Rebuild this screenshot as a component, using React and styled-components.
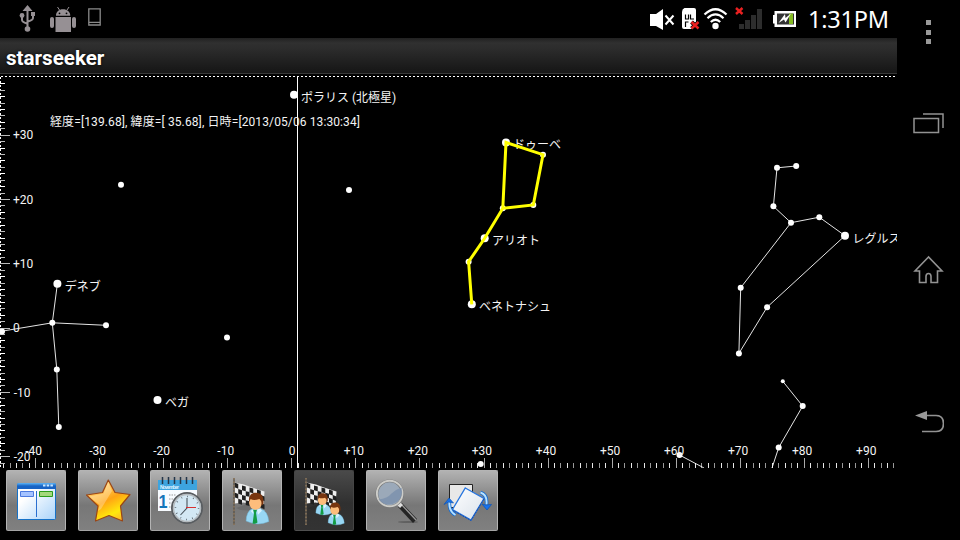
import React from 'react';
import styled, { createGlobalStyle } from 'styled-components';

const Global = createGlobalStyle`
  html, body { margin: 0; background: #000; overflow: hidden; }
  * { box-sizing: border-box; }
  svg { display: block; flex: none; }
`;

const Screen = styled.div`
  display: grid;
  grid-template-columns: 897px 63px;
  width: 960px;
  height: 540px;
  background: #000;
  color: #fff;
  overflow: hidden;
  font-family: Roboto, 'Noto Sans CJK JP', sans-serif;
`;

const Main = styled.main`
  display: flex;
  flex-direction: column;
  min-width: 0;
`;

const StatusBar = styled.header`
  display: flex;
  justify-content: space-between;
  height: 38px;
  padding: 0 9px 0 18px;
`;

const StatusGroup = styled.div`
  display: flex;
`;

const Clock = styled.time`
  width: 80px;
  margin-left: 11px;
  font: 400 23.5px/39px 'Noto Sans', sans-serif;
  letter-spacing: -0.2px;
  white-space: nowrap;
`;

const TitleBar = styled.h1`
  flex: none;
  height: 36px;
  margin: 0;
  padding-left: 6px;
  background: linear-gradient(#212121 0, #303030 5px, #2b2b2b 12px, #151515 35px, #363636 35px);
  font-size: 20.6px;
  font-weight: 700;
  line-height: 40px;
  text-shadow: 0 0 3px #000;
`;

const Toolbar = styled.nav`
  display: flex;
  gap: 12px;
  padding: 2px 6px;
`;

const Tool = styled.button`
  width: 60px;
  height: 61px;
  padding: 0;
  border: 1px solid ${(p) => (p.$dark ? '#454545' : '#b4b4b4')};
  border-bottom-color: ${(p) => (p.$dark ? '#505050' : '#a5a5a5')};
  border-radius: 2px;
  background: ${(p) =>
    p.$dark
      ? 'linear-gradient(#4a4a4a, #303030 55%, #333)'
      : 'linear-gradient(#b2b2b2, #777 58%, #808080)'};
  svg { margin: -1px; }
`;

const NavColumn = styled.aside`
  display: flex;
  flex-direction: column;
  padding: 20px 0 0 15px;
`;

const NavButton = styled.button`
  display: block;
  width: 32px;
  height: ${(p) => p.$height}px;
  margin: 0 0 ${(p) => p.$gap}px;
  padding: 0;
  border: 0;
  background: none;
`;

const Sky = styled.svg`
  text { fill: #f4f4f4; font-size: 12px; }
`;

/* ---------- sky chart ---------- */

const X0 = 292.2;
const Y0 = 328.1;
const lonTicks = Array.from({ length: 142 }, (_, i) => i - 45).filter((n) => X0 + n * 6.405 < 897);
const latTicks = Array.from({ length: 62 }, (_, i) => i - 22).filter((n) => Y0 - n * 6.43 < 468 && Y0 - n * 6.43 > 78);
const signed = (n) => (n > 0 ? `+${n}` : `${n}`);

const stars = [
  [294, 94.8, 4], [121, 184.7, 3], [349, 189.9, 3], [57.4, 283.7, 4], [52.3, 322.8, 3],
  [106, 325.3, 3], [2, 331.5, 3], [56.8, 369.4, 3], [58.8, 427, 3], [157.5, 400.1, 4],
  [227, 337.4, 3], [506, 142.4, 4], [543, 154.7, 3], [533.3, 205, 3], [502.8, 208.3, 3],
  [484.7, 238.3, 4], [468.6, 261.7, 3], [471.8, 304.3, 4], [777, 167.8, 3], [796.2, 166, 3],
  [773.4, 206.3, 3], [791, 222.7, 3], [819.3, 217.2, 3], [845, 235.7, 4], [740.7, 287.7, 3],
  [767.1, 307.2, 3], [738.9, 353.4, 3], [782.8, 381.3, 2], [802.7, 406.1, 3], [778.7, 447.6, 3],
  [679.5, 455, 3], [480.7, 464, 3],
];

const figures = [
  '57.4,283.7 52.3,322.8 56.8,369.4 58.8,427',
  '0,331.5 52.3,322.8 106,325.3',
  '796.2,166 777,167.8 773.4,206.3 791,222.7 819.3,217.2 845,235.7 767.1,307.2 738.9,353.4 740.7,287.7 791,222.7',
  '782.8,381.3 802.7,406.1 778.7,447.6 772,468',
  '679.5,455 704,468',
];

const names = [
  [301, 102.4, 'ポラリス (北極星)'], [513, 148.5, 'ドゥーベ'], [492, 245.2, 'アリオト'],
  [479, 311.2, 'ベネトナシュ'], [64.8, 291.2, 'デネブ'], [165, 406.8, 'ベガ'], [852.5, 243.2, 'レグルス'],
];

function SkyChart() {
  return (
    <Sky width="897" height="394" viewBox="0 74 897 394">
      <path d="M1 76.5H896" stroke="#fff" strokeDasharray="2 2" />
      <path d="M.5 77V468" stroke="#fff" strokeDasharray="2 2" />
      {lonTicks.map((n) => {
        const x = Math.floor(X0 + n * 6.405 - 0.3);
        const major = n % 10 === 0;
        return <path key={n} d={`M${x + 0.5} ${major ? 458 : 463}V468`} stroke={major ? '#aaa' : n % 2 ? '#e8e8e8' : '#999'} />;
      })}
      {latTicks.map((n) => {
        const y = Math.floor(Y0 - n * 6.43);
        const major = n % 10 === 0;
        return <path key={n} d={`M0 ${y + 0.5}H${major ? 10 : 5}`} stroke={major || n % 2 ? '#bbb' : '#fff'} />;
      })}
      {figures.map((f) => <polyline key={f} points={f} fill="none" stroke="#fff" strokeWidth=".9" />)}
      {stars.map(([x, y, r]) => <circle key={`${x}-${y}`} cx={x} cy={y} r={r} fill="#fff" />)}
      {names.map(([x, y, name]) => <text key={name} x={x} y={y}>{name}</text>)}
      <path d="M297.5 77V468" stroke="#fff" />
      {[-40, -30, -20, -10, 0, 10, 20, 30, 40, 50, 60, 70, 80, 90].map((n) => (
        <text key={n} x={X0 + n * 6.405 - (n ? 2.4 : 0)} y="455" textAnchor="middle">{signed(n)}</text>
      ))}
      {[30, 20, 10, 0, -10, -20].map((n) => (
        <text key={n} x={n < 0 ? 13.8 : 13} y={Y0 - n * 6.43 + 4.1}>{signed(n)}</text>
      ))}
      <text x="50" y="126.2" textLength="310">経度=[139.68], 緯度=[ 35.68], 日時=[2013/05/06 13:30:34]</text>
      <polyline
        points="471.8,304.3 468.6,261.7 484.7,238.3 502.8,208.3 533.3,205 543,154.7 506,142.4 502.8,208.3"
        fill="none" stroke="#ff0" strokeWidth="3"
      />
    </Sky>
  );
}

/* ---------- status icons ---------- */

const NoticeIcons = () => (
  <svg width="86" height="38" viewBox="18 0 86 38" fill="#969094">
    <path d="M27.5 9V28M22 16v4q0 2 5 3.5M33 14v4q0 2-5 3.5" fill="none" stroke="#969094" strokeWidth="2" />
    <path d="M27.5 5l5 6h-10zM31 12h4v4h-4z" />
    <circle cx="22" cy="15.5" r="2.4" /><circle cx="27.5" cy="29" r="2.8" />
    <path d="M56 15.7c0-4 3-6.5 7-6.5s7.3 2.5 7.3 6.5zM55.500 17H71v15H55.500z" />
    <rect x="50" y="17" width="4" height="11" rx="2" /><rect x="72" y="17" width="4" height="11" rx="2" />
    <path d="M57.500 7l2 3M69 7l-2 3" stroke="#969094" strokeWidth="1" />
    <circle cx="59.500" cy="13.300" r=".9" fill="#000" /><circle cx="66.500" cy="13.300" r=".9" fill="#000" />
    <path d="M88.800 8.800h11.400v16.200H88.800zM89 22.300h11" fill="none" stroke="#8a8a8a" strokeWidth="1.300" />
  </svg>
);

const SystemIcons = () => (
  <svg width="148" height="38" viewBox="649 0 148 38" fill="#fff">
    <path d="M650 14h6l7-5v21l-7-4h-6zM690 8h-5.500q-2.500 1-2.500 4v15q0 2 2 2h8v-4h4V10q0-2-2-2z" />
    <path d="M665.500 15.500l8 9M673.500 15.500l-8 9" stroke="#fff" strokeWidth="2" />
    <path d="M685.500 14.500v4.500h3v-4.500M690.500 14.500v4.500h3.500M685.500 27v-5h3" fill="none" stroke="#000" strokeWidth="1.200" />
    <path d="M691.500 22l7 6.500M698.500 22l-7 6.500" stroke="#000" strokeWidth="4" />
    <path d="M691.500 22l7 6.500M698.500 22l-7 6.500" stroke="#e92020" strokeWidth="2.500" />
    <g fill="none" stroke="#fff" strokeWidth="2.200">
      <path d="M704.500 14.500q11-10.500 22 0M707.500 18.200q8-7.500 16 0M710.800 22q4.700-4.500 9.400 0" />
    </g>
    <circle cx="715.500" cy="26" r="3.200" />
    <path d="M736 8l6.500 6M742.500 8l-6.500 6" stroke="#e92020" strokeWidth="2.400" />
    <path d="M739 24h5v5h-5zM745 20h5v9h-5zM751 15h5v14h-5zM757 9h5v20h-5z" fill="#2d2d2d" />
    <path d="M774.500 11H796v16h-21.500v-3.500H773V15h1.500z" />
    <path d="M777 13.500h17v11h-17z" fill="#333" />
    <path d="M789 13.500h4v10.500h-4z" fill="#85bc22" />
    <path d="M778.500 23l6.500-9 .5 4 5.500-4.500-5.500 9-1.500-3z" />
  </svg>
);

/* ---------- toolbar drawings, each on a 60x61 field ---------- */

const Art = ({ children }) => <svg width="60" height="61" viewBox="0 0 60 61">{children}</svg>;

const WindowArt = () => (
  <Art>
    <defs>
      <linearGradient id="pane" x2="1" y2="1"><stop offset=".3" stopColor="#fff" /><stop offset="1" stopColor="#a9d3fa" /></linearGradient>
      <linearGradient id="bar" x2="0" y2="1"><stop stopColor="#5fb6f6" /><stop offset=".5" stopColor="#1763c4" /></linearGradient>
    </defs>
    <rect x="11.500" y="13.500" width="38" height="36" rx="1" fill="url(#pane)" stroke="#1672c8" />
    <path d="M11 15q0-2 2-2h35q2 0 2 2v4H11z" fill="url(#bar)" />
    <path d="M37 15.500h2.500M40.700 15.500h2.500M44.400 15.500h2.500" stroke="#c9e7ff" strokeWidth="2" />
    <path d="M30.500 21v26" stroke="#2a6fd0" />
    <path d="M14.500 21.500h13v5h-13z" fill="#a5c3ff" stroke="#4d7be0" />
    <path d="M33.500 21.500h13v5h-13z" fill="#a4d87c" stroke="#2c9c1c" />
  </Art>
);

const StarArt = () => (
  <Art>
    <defs>
      <linearGradient id="gold" x1=".2" x2=".75" y2="1"><stop stopColor="#ffe09a" /><stop offset=".4" stopColor="#ffb32c" /><stop offset=".5" stopColor="#ffa414" /><stop offset=".8" stopColor="#ffe90c" /><stop offset="1" stopColor="#ffb62a" /></linearGradient>
    </defs>
    <path d="M30.300 10L37 22.500l15 2-9.500 11.500 2 15L31 45.500 17.500 51l2.500-15L8.500 25l16-2.500z" fill="url(#gold)" stroke="#9a4616" strokeWidth="1.200" strokeLinejoin="round" />
    <path d="M30 12l4 9L23 39l-3 2 1.500-6L11 26.500l14.500-3z" fill="#fff" opacity=".28" />
  </Art>
);

const ScheduleArt = () => (
  <Art>
    <path d="M8 12h39v29H8z" fill="#f7fbff" />
    <path d="M8 10h39v10H8z" fill="#3da4df" />
    <path d="M12.500 7v7M18.500 7v7M24.500 7v7M30.500 7v7M36.500 7v7M42.500 7v7" stroke="#24364a" strokeWidth="1.500" />
    <text x="10" y="19.300" fontSize="5" fontFamily="Liberation Sans" fontWeight="700" fill="#dff2ff" textLength="19">November</text>
    <text x="8.500" y="37.500" fontSize="19" fontFamily="Liberation Sans" fontWeight="700" fill="#1275ba" textLength="9" lengthAdjust="spacingAndGlyphs">1</text>
    <path d="M19 25h7M19 29h5M19 33h4M19 37h4" stroke="#999" strokeDasharray="1.500 1" />
    <circle cx="37" cy="38" r="15" fill="#d3e8f4" stroke="#595d61" strokeWidth="2" />
    <circle cx="37" cy="38" r="13.500" fill="none" stroke="#b6bcc0" strokeWidth="1.500" />
    <circle cx="37" cy="38" r="11.500" fill="none" stroke="#48515a" strokeWidth="1.500" strokeDasharray=".7 5.320" />
    <path d="M37 28v10l-6.500 7" fill="none" stroke="#49545c" strokeWidth="1.100" />
    <path d="M36 37.500h10" stroke="#d83131" />
  </Art>
);

const flagCells = Array.from({ length: 32 }, (_, i) => [i % 8, Math.floor(i / 8)]).filter(([c, r]) => (c + r) % 2 === 0);
const flagRise = (c) => 12.5 + c * 1.25 + Math.sin(c / 1.3) * 0.5;
const Flag = () => (
  <g>
    <path d="M14 38l19-7v10l-15-1z" fill="#000" opacity=".1" />
    <path d="M12.500 12.500L22 14.500l8 3 12.500 4-1 15-11-2-9-2-9 1z" fill="#efefef" />
    {flagCells.map(([c, r]) => {
      const x = 12.500 + c * 3.750;
      const y = flagRise(c) + r * 5 - c * r * 0.14;
      const y2 = flagRise(c + 1) + r * 5 - c * r * 0.14;
      return <path key={`${c}-${r}`} d={`M${x} ${y}L${x + 3.750} ${y2}v4.700L${x} ${y + 4.700}z`} fill="#202020" />;
    })}
    <path d="M12 8v47" stroke="#5f574c" strokeWidth="1.500" />
    <path d="M12 8v47" stroke="#a28460" strokeDasharray="1.500 2" />
  </g>
);

const Person = ({ x, y, s }) => (
  <g transform={`translate(${x} ${y}) scale(${s})`}>
    <path d="M-10.500 20.500q0-9.500 6-12.500H4q7.500 2 8.500 13-11 5-23 -.5z" fill="#98d7f4" stroke="#74bfe2" strokeWidth=".5" />
    <path d="M-3.500 9h4L-.5 12 1 22q-2.500 2-5 1l1.500-11z" fill="#139c45" />
    <path d="M.5 9L4 7.500 5.500 10 1.500 14zM-3.500 9l-2.500 1 2.500 3z" fill="#d9f3ff" />
    <ellipse cx="-1" cy="1.500" rx="6.500" ry="7.500" fill="#fdbd7c" />
    <path d="M-7.500 1c-1-6 2-9.500 7-9.500S8 -5 7 3L5 5q1-5-2-7-6 2-9 0z" fill="#78350f" />
  </g>
);

const SearchArt = () => (
  <Art>
    <ellipse cx="42" cy="52" rx="10" ry="1" fill="#444" opacity=".5" />
    <path d="M34 35l15 16" stroke="#242424" strokeWidth="5.500" />
    <path d="M35 34l15 16" stroke="#999" strokeWidth="1.300" />
    <path d="M32.500 33.500l3 3" stroke="#ddd" strokeWidth="4" />
    <circle cx="23.700" cy="23.700" r="12.800" fill="#9ba9b9" stroke="#777" strokeWidth="2.800" />
    <circle cx="23.700" cy="23.500" r="12.800" fill="none" stroke="#cdcdc9" strokeWidth="1.900" />
    <path d="M12.500 29.500q9-1 13-6 4-4 10-6 2 9-4 14-11 7-19-2z" fill="#7a90ac" opacity=".8" />
  </Art>
);

const RotateArt = () => (
  <Art>
    <defs><linearGradient id="sheet" x2="1" y2="1"><stop stopColor="#fff" /><stop offset="1" stopColor="#d9e1ea" /></linearGradient></defs>
    <path d="M11.500 14.500h23v23h-23z" fill="#e8e8e8" stroke="#222" />
    <path d="M27.300 18L46 28.500 33 50 14.500 39.500z" fill="url(#sheet)" stroke="#2876df" strokeWidth="1.300" />
    <path d="M46 29L33 50.500l-18-10" fill="none" stroke="#1549a8" strokeDasharray="2 1" />
    <path d="M42.500 22.500q7 2 6 12M17.500 45q-7-4-6-13" fill="none" stroke="#176cd0" strokeWidth="3.600" />
    <path d="M42.500 22.500q7 2 6 12M17.500 45q-7-4-6-13" fill="none" stroke="#b9e2ff" strokeWidth="1.900" />
    <path d="M44 34l4 1 5.500-.5-4.500 5.500zM6 34.500l5-6.500 4.500 5-5-1z" fill="#1872ec" stroke="#0b54b7" strokeWidth=".7" />
  </Art>
);

const tools = [
  { id: 'window', art: <WindowArt /> },
  { id: 'favorites', art: <StarArt /> },
  { id: 'schedule', art: <ScheduleArt /> },
  { id: 'goal', art: <Art><Flag /><Person x={34.5} y={31} s={0.98} /></Art> },
  { id: 'goals', dark: true, art: <Art><Flag /><Person x={29} y={29} s={0.68} /><Person x={41.5} y={38.5} s={0.7} /></Art> },
  { id: 'search', art: <SearchArt /> },
  { id: 'rotate', art: <RotateArt /> },
];

export default function App() {
  return (
    <>
      <Global />
      <Screen>
        <Main>
          <StatusBar>
            <StatusGroup><NoticeIcons /></StatusGroup>
            <StatusGroup><SystemIcons /><Clock>1:31PM</Clock></StatusGroup>
          </StatusBar>
          <TitleBar>starseeker</TitleBar>
          <SkyChart />
          <Toolbar>
            {tools.map((t) => <Tool key={t.id} aria-label={t.id} $dark={t.dark}>{t.art}</Tool>)}
          </Toolbar>
        </Main>
        <NavColumn>
          <NavButton aria-label="menu" $height={25} $gap={67}>
            <svg width="32" height="25" viewBox="0 0 32 25"><path d="M14 0h5v5h-5zM14 10h5v5h-5zM14 19h5v5h-5z" fill="#999" /></svg>
          </NavButton>
          <NavButton aria-label="recent" $height={22} $gap={121}>
            <svg width="32" height="22" viewBox="912 112 32 22" fill="none" stroke="#929292" strokeWidth="1.500"><path d="M914 118.500h24.500v14H914zM923 114h20v14" /></svg>
          </NavButton>
          <NavButton aria-label="home" $height={29} $gap={126}>
            <svg width="32" height="29" viewBox="912 255 32 29" fill="none" stroke="#929292" strokeWidth="1.600"><path d="M928.500 257l-13.500 14h4.500v11.500h6.500v-6q0-3 2.500-3t2.500 3v6h6.500V271h4.500z" /></svg>
          </NavButton>
          <NavButton aria-label="back" $height={23} $gap={0}>
            <svg width="32" height="23" viewBox="912 410 32 23"><path d="M925 415.500h11q7.500 0 7.500 8t-7.500 8h-14" fill="none" stroke="#929292" strokeWidth="1.700" /><path d="M915 415.500l12-4.500v9z" fill="#999" /></svg>
          </NavButton>
        </NavColumn>
      </Screen>
    </>
  );
}
